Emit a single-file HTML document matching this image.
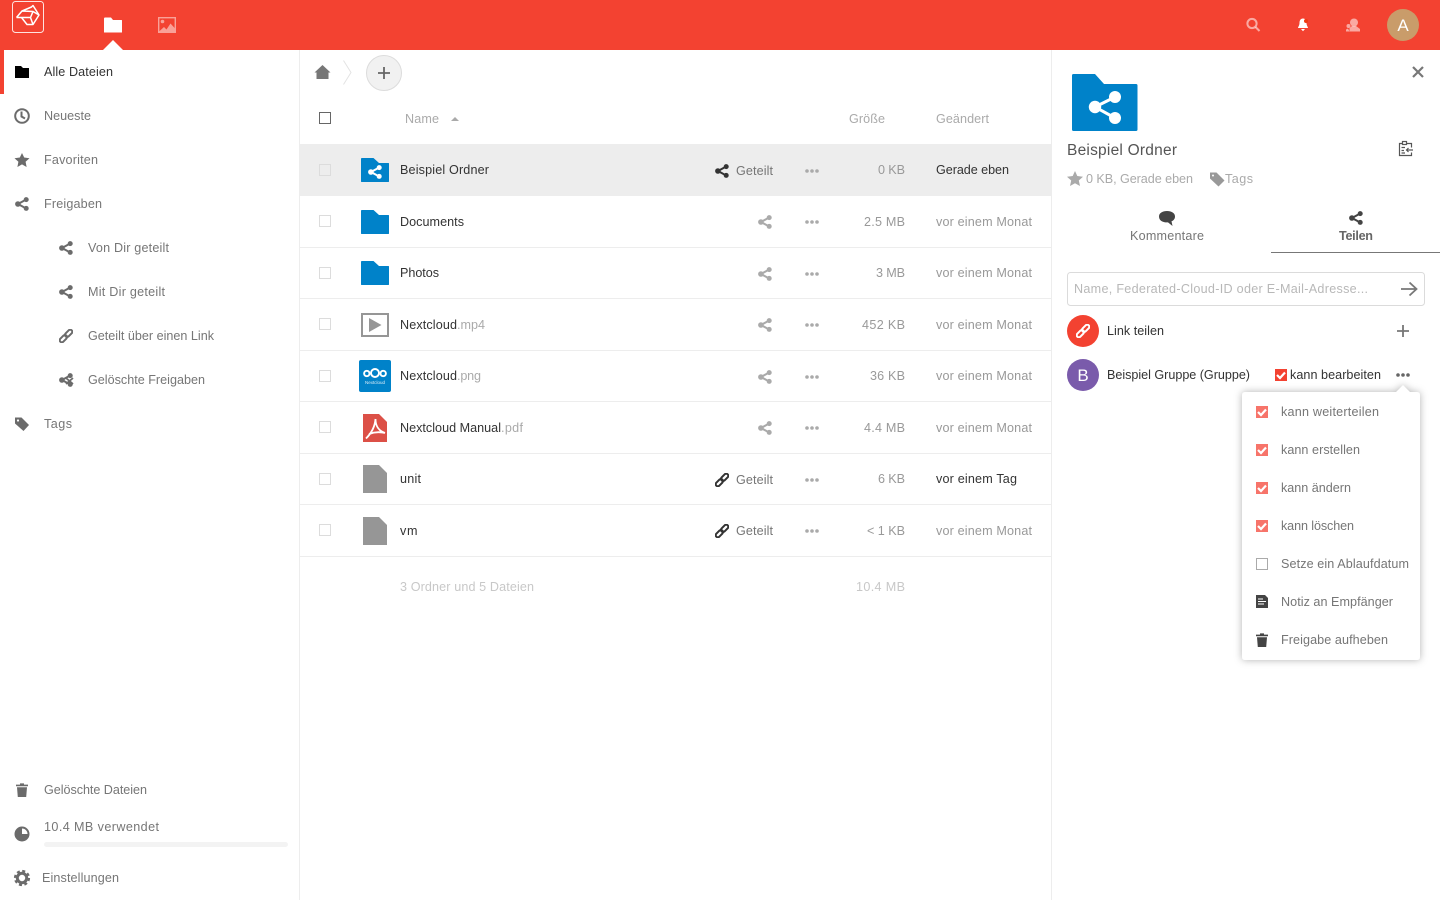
<!DOCTYPE html>
<html lang="de"><head><meta charset="utf-8"><title>Dateien</title>
<style>
html,body{margin:0;padding:0;background:#fff;width:1440px;height:900px;overflow:hidden}
svg{display:block}
text{font-family:"Liberation Sans",sans-serif;font-size:12.6px;fill:#777}
.d{fill:#333}.g{fill:#767676}.l{fill:#aaa}.m{fill:#999}.f{fill:#c8c8c8}
</style></head><body>
<svg width="1440" height="900" viewBox="0 0 1440 900" xmlns="http://www.w3.org/2000/svg">
<defs>
<symbol id="share" viewBox="0 0 14 14"><path d="M11 2.600 3 7l8 4.400" fill="none" stroke="currentColor" stroke-width="2"/><g fill="currentColor"><circle cx="2.900" cy="7" r="2.800"/><circle cx="11.200" cy="2.600" r="2.500"/><circle cx="11.200" cy="11.400" r="2.500"/></g></symbol>
<symbol id="link" viewBox="0 0 14 14"><g transform="rotate(-45 7 7)" fill="none" stroke="currentColor" stroke-width="2"><rect x="-1" y="4.900" width="8.600" height="4.200" rx="2.100"/><rect x="6.400" y="4.900" width="8.600" height="4.200" rx="2.100"/></g></symbol>
<symbol id="dots" viewBox="0 0 14 4"><g fill="currentColor"><circle cx="2" cy="2" r="1.800"/><circle cx="7" cy="2" r="1.800"/><circle cx="12" cy="2" r="1.800"/></g></symbol>
<symbol id="folder" viewBox="0 0 28 24"><path d="M0 .8Q0 0 .8 0H12.500L18 5H27.400Q28 5 28 5.600V23.400Q28 24 27.400 24H.6Q0 24 0 23.400Z" fill="#0082c9"/></symbol>
<symbol id="file" viewBox="0 0 24 28"><path d="M0 0H16L24 8V28H0Z" fill="currentColor"/></symbol>
<symbol id="trash" viewBox="0 0 14 14"><path d="M1 1.600H5V.4H9V1.600H13V3.200H1ZM2 4.200H12L11.200 14H2.800Z" fill="currentColor"/></symbol>
</defs>

<!-- header -->
<rect width="1440" height="50" fill="#f34231"/>
<rect x="12.500" y="1.500" width="31" height="31" rx="3" fill="none" stroke="#fff" stroke-opacity=".85"/>
<g fill="none" stroke="#fff" stroke-width="1.500" stroke-linejoin="round"><path d="M16.500 17.500 22 11 31.500 7 33 5.500 39 15 33 24.500H27L21.500 17.500H16.500M21.500 17.500H30.500L33 11.500 22 11M30.500 17.500 33 24.500M33 11.500 39 15"/></g>
<path d="M104 18.500Q104 17.500 105 17.500H111L113 20H121.500Q122 20 122 20.500V32.500H104Z" fill="#fff"/>
<path d="M103 50 113 40 123 50Z" fill="#fff"/>
<g opacity=".5"><rect x="158.700" y="17.700" width="16.600" height="14.600" fill="none" stroke="#fff" stroke-width="1.400"/><circle cx="162.500" cy="21.500" r="1.800" fill="#fff"/><path d="M158.500 32 164 27l2.500 2.500 4-6 5 5.500v3Z" fill="#fff"/></g>
<g fill="none" stroke="#fff" stroke-opacity=".55" stroke-width="2"><circle cx="1252" cy="23.500" r="4.600"/><path d="M1255.500 27 1259.500 31"/></g>
<path d="M1303 18.500c2.500 0 3.500 2 3.500 4.500 0 2.500 1.500 4 1.500 5h-10c0-1 1.500-2.500 1.500-5s1-4.500 3.500-4.500ZM1301 29h4l-2 2.200Z" fill="#fff"/>
<circle cx="1306" cy="21" r="2" fill="#f03a10"/>
<g fill="#fff" fill-opacity=".55"><circle cx="1354" cy="22.500" r="4"/><path d="M1349.500 31.500v-3.500l2.500-2h4l4 3v2.500Z"/><circle cx="1348.500" cy="26" r="2"/><path d="M1346 31.500v-2l2-1 1.500 3Z"/></g>
<circle cx="1403" cy="25" r="16" fill="#c99c6a"/>
<text x="1403" y="31" text-anchor="middle" style="font-size:17px;fill:#fff">A</text>

<!-- sidebar -->
<rect x="299" y="50" width="1" height="850" fill="#ededed"/>
<rect x="0" y="50" width="4" height="44" fill="#f34231"/>
<path d="M15 66H21L23 68H29V78H15Z" fill="#000"/>
<text class="d" x="44" y="76" textLength="69">Alle Dateien</text>
<g fill="none" stroke="#6b6b6b" stroke-width="2"><circle cx="22" cy="116" r="6.800"/><path d="M21.500 111.500V116.500L25 118.500"/></g>
<text class="g" x="44" y="120" textLength="47">Neueste</text>
<path d="M22 153 24.200 157.500 29.500 158.200 25.600 161.800 26.600 167 22 164.400 17.400 167 18.400 161.800 14.500 158.200 19.800 157.500Z" fill="#6b6b6b"/>
<text class="g" x="44" y="164" textLength="54">Favoriten</text>
<use href="#share" x="15" y="197" width="14" height="14" color="#6b6b6b"/>
<text class="g" x="44" y="208" textLength="58">Freigaben</text>
<use href="#share" x="59" y="241" width="14" height="14" color="#6b6b6b"/>
<text class="g" x="88" y="252" textLength="81">Von Dir geteilt</text>
<use href="#share" x="59" y="285" width="14" height="14" color="#6b6b6b"/>
<text class="g" x="88" y="296" textLength="77">Mit Dir geteilt</text>
<use href="#link" x="59" y="329" width="14" height="14" color="#6b6b6b"/>
<text class="g" x="88" y="340" textLength="126">Geteilt über einen Link</text>
<use href="#share" x="59" y="373" width="14" height="14" color="#6b6b6b"/>
<path d="M66 378 73 384M73 378 66 384" stroke="#6b6b6b" stroke-width="1.800"/>
<text class="g" x="88" y="384" textLength="117">Gelöschte Freigaben</text>
<path d="M15 417.500H21.500L29 425 23.500 431 15 423.500Z" fill="#6b6b6b"/>
<circle cx="18" cy="420.500" r="1.100" fill="#fff"/>
<text class="g" x="44" y="428" textLength="28">Tags</text>
<use href="#trash" x="15" y="783" width="14" height="14" color="#6b6b6b"/>
<text class="g" x="44" y="794" textLength="103">Gelöschte Dateien</text>
<circle cx="22" cy="834" r="6.500" fill="#fff" stroke="#6b6b6b" stroke-width="2"/><path d="M22 828V840A6 6 0 0 1 16 834 6 6 0 0 1 22 828ZM22 834H28A6 6 0 0 1 22 840Z" fill="#6b6b6b"/>
<text class="g" x="44" y="831" textLength="115">10.4 MB verwendet</text>
<rect x="44" y="842" width="244" height="5" rx="2.500" fill="#f3f3f3"/>
<circle cx="22" cy="878" r="4.700" fill="none" stroke="#6b6b6b" stroke-width="3"/>
<circle cx="22" cy="878" r="7" fill="none" stroke="#6b6b6b" stroke-width="2.200" stroke-dasharray="3 2.500"/>
<text class="g" x="42" y="882" textLength="77">Einstellungen</text>

<!-- breadcrumb -->
<path d="M322.500 65 330.500 72.500H328.500V79H316.500V72.500H314.500Z" fill="#777"/>
<path d="M343.500 60.500 351 72.500 343.500 84.500" fill="none" stroke="#e3e3e3"/>
<circle cx="384" cy="73" r="17.500" fill="#f1f1f1" stroke="#dcdcdc"/>
<path d="M378 73H390M384 67V79" stroke="#666" stroke-width="1.800"/>

<!-- table head -->
<rect x="319.500" y="112.500" width="11" height="11" fill="#fff" stroke="#666"/>
<text class="l" x="405" y="123" textLength="34">Name</text>
<path d="M451 121 455 117 459 121Z" fill="#aaa"/>
<text class="l" x="849" y="123" textLength="36">Größe</text>
<text class="l" x="936" y="123" textLength="53">Geändert</text>

<!-- rows -->
<rect x="300" y="144" width="751" height="52" fill="#ededed"/>
<g fill="#ededed"><rect x="300" y="247" width="751" height="1"/><rect x="300" y="298" width="751" height="1"/><rect x="300" y="350" width="751" height="1"/><rect x="300" y="401" width="751" height="1"/><rect x="300" y="453" width="751" height="1"/><rect x="300" y="504" width="751" height="1"/><rect x="300" y="556" width="751" height="1"/></g>
<g fill="#fff" stroke="#dcdcdc"><rect x="319.500" y="164.500" width="11" height="11" fill="#ededed"/><rect x="319.500" y="215.500" width="11" height="11"/><rect x="319.500" y="267.500" width="11" height="11"/><rect x="319.500" y="318.500" width="11" height="11"/><rect x="319.500" y="370.500" width="11" height="11"/><rect x="319.500" y="421.500" width="11" height="11"/><rect x="319.500" y="473.500" width="11" height="11"/><rect x="319.500" y="524.500" width="11" height="11"/></g>

<use href="#folder" x="361" y="158" width="28" height="24"/>
<use href="#share" x="368" y="165" width="14" height="14" color="#fff"/>
<use href="#folder" x="361" y="210" width="28" height="24"/>
<use href="#folder" x="361" y="261" width="28" height="24"/>
<rect x="362" y="314" width="26" height="22" fill="#fff" stroke="#969696" stroke-width="2"/>
<path d="M369 318 381.500 325 369 332Z" fill="#969696"/>
<rect x="359" y="360" width="32" height="32" rx="2" fill="#0082c9"/>
<g fill="none" stroke="#fff" stroke-width="1.900"><circle cx="366.800" cy="373.500" r="2.700"/><circle cx="375" cy="373" r="4"/><circle cx="383.200" cy="373.500" r="2.700"/></g>
<text x="375" y="384" text-anchor="middle" textLength="20" style="font-size:4.500px;fill:#d8ecf7">Nextcloud</text>
<path d="M363 414H379L387 422V442H363Z" fill="#dc5047"/>
<path d="M375.500 419C375 426 371.500 433 366 438.500M375.500 419C375.500 426 379 431 385 433M369 434C373 432.500 379 431.500 385 433" fill="none" stroke="#fff" stroke-width="1.800"/>
<use href="#file" x="363" y="465" width="24" height="28" color="#969696"/>
<use href="#file" x="363" y="517" width="24" height="28" color="#969696"/>

<text class="d" x="400" y="174" textLength="89">Beispiel Ordner</text>
<text class="d" x="400" y="226" textLength="64">Documents</text>
<text class="d" x="400" y="277" textLength="39">Photos</text>
<text class="d" x="400" y="329" textLength="57">Nextcloud</text><text class="l" x="457" y="329" textLength="28">.mp4</text>
<text class="d" x="400" y="380" textLength="57">Nextcloud</text><text class="l" x="457" y="380" textLength="24">.png</text>
<text class="d" x="400" y="432" textLength="101">Nextcloud Manual</text><text class="l" x="501" y="432" textLength="22">.pdf</text>
<text class="d" x="400" y="483" textLength="21">unit</text>
<text class="d" x="400" y="535" textLength="17.500">vm</text>

<use href="#share" x="715" y="164" width="14" height="14" color="#333"/>
<text class="g" x="736" y="175" textLength="37">Geteilt</text>
<use href="#share" x="758" y="215" width="14" height="14" color="#aaa"/>
<use href="#share" x="758" y="267" width="14" height="14" color="#aaa"/>
<use href="#share" x="758" y="318" width="14" height="14" color="#aaa"/>
<use href="#share" x="758" y="370" width="14" height="14" color="#aaa"/>
<use href="#share" x="758" y="421" width="14" height="14" color="#aaa"/>
<use href="#link" x="715" y="473" width="14" height="14" color="#333"/>
<text class="g" x="736" y="484" textLength="37">Geteilt</text>
<use href="#link" x="715" y="524" width="14" height="14" color="#333"/>
<text class="g" x="736" y="535" textLength="37">Geteilt</text>

<use href="#dots" x="805" y="169" width="14" height="4" color="#aaa"/>
<use href="#dots" x="805" y="220" width="14" height="4" color="#aaa"/>
<use href="#dots" x="805" y="272" width="14" height="4" color="#aaa"/>
<use href="#dots" x="805" y="323" width="14" height="4" color="#aaa"/>
<use href="#dots" x="805" y="375" width="14" height="4" color="#aaa"/>
<use href="#dots" x="805" y="426" width="14" height="4" color="#aaa"/>
<use href="#dots" x="805" y="478" width="14" height="4" color="#aaa"/>
<use href="#dots" x="805" y="529" width="14" height="4" color="#aaa"/>

<text class="m" x="878" y="174" textLength="27">0 KB</text>
<text class="m" x="864" y="226" textLength="41">2.5 MB</text>
<text class="m" x="876" y="277" textLength="29">3 MB</text>
<text class="m" x="862" y="329" textLength="43">452 KB</text>
<text class="m" x="870" y="380" textLength="35">36 KB</text>
<text class="m" x="864" y="432" textLength="41">4.4 MB</text>
<text class="m" x="878" y="483" textLength="27">6 KB</text>
<text class="m" x="867" y="535" textLength="38">&lt; 1 KB</text>

<text class="d" x="936" y="174" textLength="73">Gerade eben</text>
<text class="m" x="936" y="226" textLength="96">vor einem Monat</text>
<text class="m" x="936" y="277" textLength="96">vor einem Monat</text>
<text class="m" x="936" y="329" textLength="96">vor einem Monat</text>
<text class="m" x="936" y="380" textLength="96">vor einem Monat</text>
<text class="m" x="936" y="432" textLength="96">vor einem Monat</text>
<text class="d" x="936" y="483" textLength="81">vor einem Tag</text>
<text class="m" x="936" y="535" textLength="96">vor einem Monat</text>

<text class="f" x="400" y="591" textLength="134">3 Ordner und 5 Dateien</text>
<text class="f" x="856" y="591" textLength="49">10.4 MB</text>

<!-- details panel -->
<rect x="1051" y="50" width="1" height="850" fill="#ededed"/>
<path d="M1413 67 1423 77M1423 67 1413 77" stroke="#777" stroke-width="2.200"/>
<path d="M1072 75.500Q1072 74 1073.500 74H1095L1104 84H1136Q1137.500 84 1137.500 85.500V129.500Q1137.500 131 1136 131H1073.500Q1072 131 1072 129.500Z" fill="#0082c9"/>
<path d="M1115 97 1095 107 1115 118" fill="none" stroke="#fff" stroke-width="3"/>
<g fill="#fff"><circle cx="1095" cy="107" r="6.200"/><circle cx="1115" cy="97" r="6"/><circle cx="1115" cy="118" r="6"/></g>
<text x="1067" y="155" textLength="110" style="font-size:15.500px;fill:#555">Beispiel Ordner</text>
<g fill="none" stroke="#555" stroke-width="1.200"><path d="M1402 143.500H1399.500V155.500H1411.500V152.500M1411.500 147.500V143.500H1407"/><rect x="1402.500" y="141.500" width="4" height="3"/><path d="M1401.500 147.500H1405M1401.500 150.500H1404M1401.500 153H1405M1413 150H1406.500M1408.500 148 1406.500 150 1408.500 152"/></g>
<path d="M1075 171 1077.300 176 1083 176.700 1078.800 180.500 1080 186 1075 183.300 1070 186 1071.200 180.500 1067 176.700 1072.700 176Z" fill="#aaa"/>
<text class="l" x="1086" y="183" textLength="107">0 KB, Gerade eben</text>
<path d="M1210 172.500H1216.500L1224.500 180.500 1218.500 186.500 1210 178.500Z" fill="#999"/><circle cx="1213" cy="175.500" r="1" fill="#fff"/>
<text class="l" x="1225" y="183" textLength="28">Tags</text>
<path d="M1167 211c4.500 0 8 2 8 5.500 0 2.500-1.500 4-3.500 4.800L1172.500 226l-4.500-3.600c-5.500.3-9-2-9-5.900 0-3.500 3.500-5.500 8-5.500Z" fill="#444"/>
<text class="g" x="1130" y="240" textLength="74">Kommentare</text>
<use href="#share" x="1349" y="211" width="14" height="14" color="#444"/>
<text x="1339" y="240" textLength="34" style="font-weight:bold;fill:#666">Teilen</text>
<rect x="1271" y="252" width="169" height="1" fill="#777"/>
<rect x="1067.500" y="272.500" width="357" height="33" rx="3" fill="#fff" stroke="#dbdbdb"/>
<text x="1074" y="293" textLength="294" style="fill:#b8b8b8">Name, Federated-Cloud-ID oder E-Mail-Adresse...</text>
<path d="M1401 289H1416M1409.500 282.500 1416.500 289 1409.500 295.500" fill="none" stroke="#777" stroke-width="1.800"/>
<circle cx="1083" cy="331" r="16" fill="#f34231"/>
<use href="#link" x="1076" y="324" width="14" height="14" color="#fff"/>
<text class="d" x="1107" y="335" textLength="57">Link teilen</text>
<path d="M1397 331H1409M1403 325V337" stroke="#777" stroke-width="1.800"/>
<circle cx="1083" cy="375" r="16" fill="#7a5bab"/>
<text x="1083" y="381" text-anchor="middle" style="font-size:17px;fill:#fff">B</text>
<text class="d" x="1107" y="379" textLength="143">Beispiel Gruppe (Gruppe)</text>
<rect x="1275" y="369" width="12" height="12" fill="#f34231"/>
<path d="M1277 375 1280 378 1285 372.500" fill="none" stroke="#fff" stroke-width="2.200"/>
<text class="d" x="1290" y="379" textLength="91">kann bearbeiten</text>
<use href="#dots" x="1396" y="373" width="14" height="4" color="#666"/>

<!-- popover -->
<g style="filter:drop-shadow(0 0 4px rgba(0,0,0,.3))">
<path d="M1245 392H1396L1403 385 1410 392H1417Q1420 392 1420 395V657Q1420 660 1417 660H1245Q1242 660 1242 657V395Q1242 392 1245 392Z" fill="#fff"/>
</g>
<g fill="#f7746a"><rect x="1256" y="406" width="12" height="12"/><rect x="1256" y="444" width="12" height="12"/><rect x="1256" y="482" width="12" height="12"/><rect x="1256" y="520" width="12" height="12"/></g>
<g fill="none" stroke="#fff" stroke-width="2.200"><path d="M1258 412 1261 415 1266 409.500"/><path d="M1258 450 1261 453 1266 447.500"/><path d="M1258 488 1261 491 1266 485.500"/><path d="M1258 526 1261 529 1266 523.500"/></g>
<rect x="1256.500" y="558.500" width="11" height="11" fill="#fff" stroke="#aaa"/>
<path d="M1256 595H1265L1268 598V608H1256Z" fill="#444"/>
<path d="M1258 599H1263M1258 601.500H1266M1258 604H1264" stroke="#fff"/>
<use href="#trash" x="1255" y="633" width="14" height="14" color="#444"/>
<text class="g" x="1281" y="416" textLength="98">kann weiterteilen</text>
<text class="g" x="1281" y="454" textLength="79">kann erstellen</text>
<text class="g" x="1281" y="492" textLength="70">kann ändern</text>
<text class="g" x="1281" y="530" textLength="73">kann löschen</text>
<text class="g" x="1281" y="568" textLength="128">Setze ein Ablaufdatum</text>
<text class="g" x="1281" y="606" textLength="112">Notiz an Empfänger</text>
<text class="g" x="1281" y="644" textLength="107">Freigabe aufheben</text>
</svg>
</body></html>
